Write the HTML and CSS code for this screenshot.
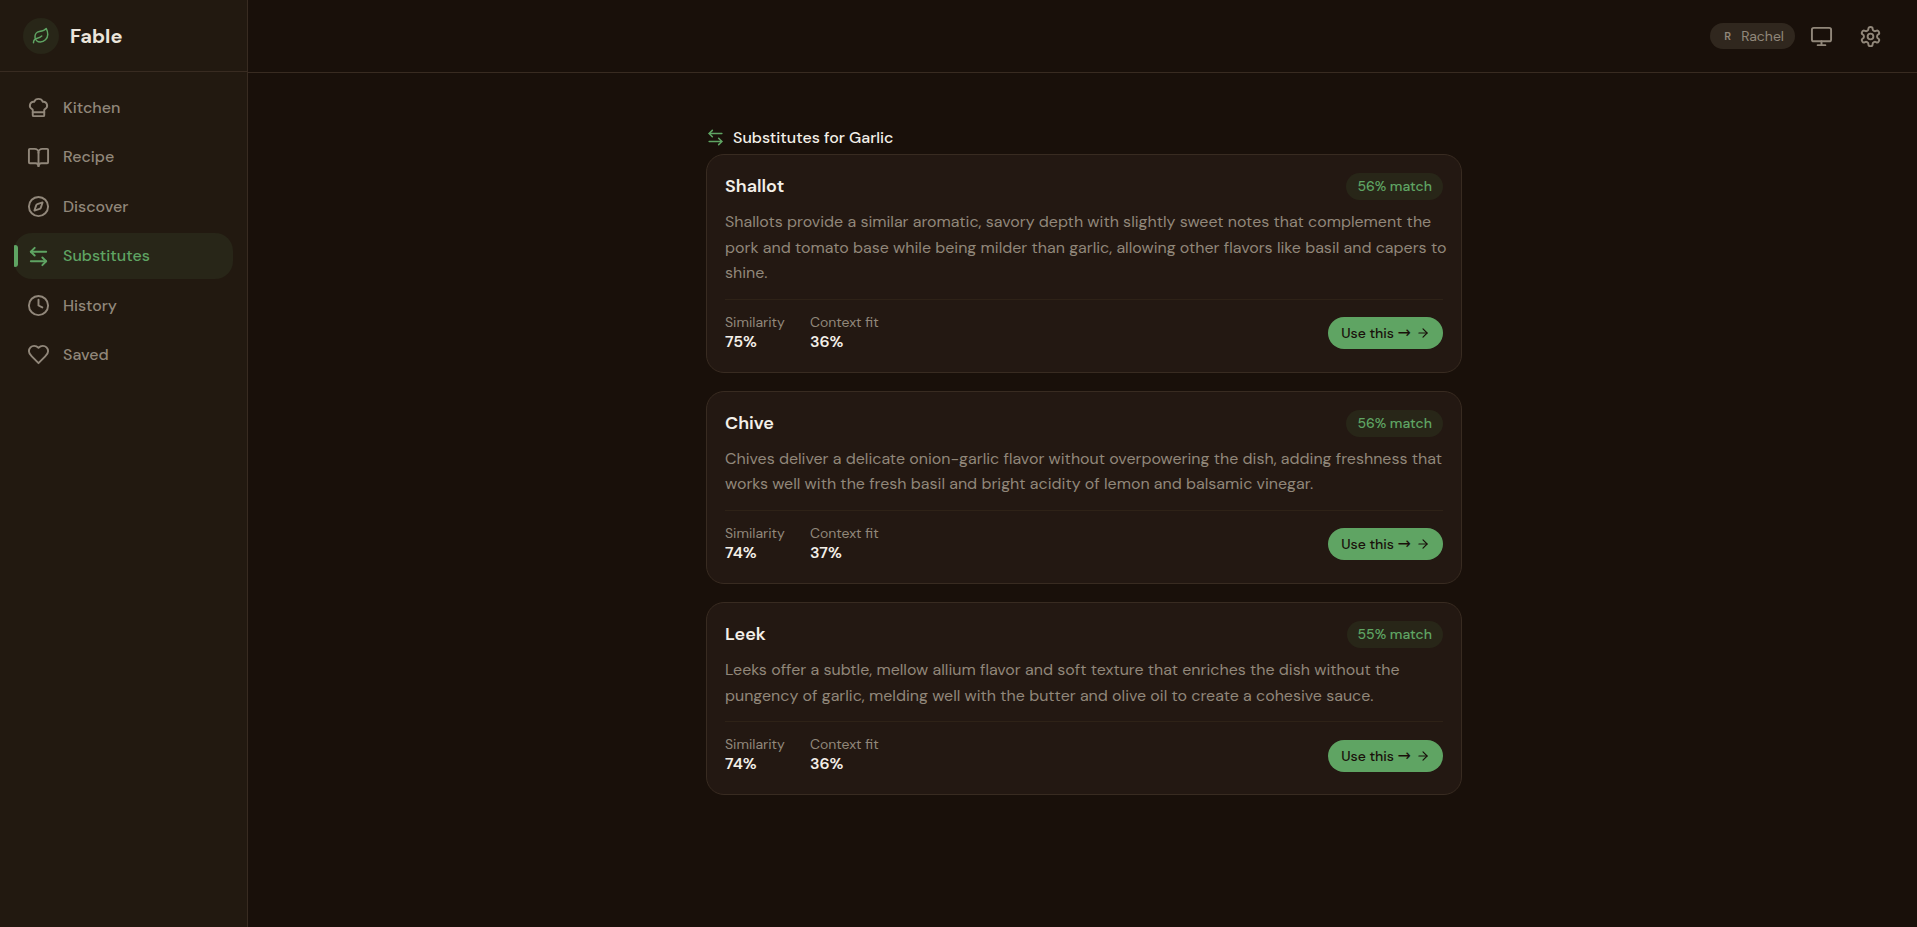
FILE: index.html
```html
<!DOCTYPE html>
<html lang="en">
<head>
<meta charset="utf-8">
<meta name="viewport" content="width=device-width, initial-scale=1">
<title>Fable – Substitutes</title>
<link rel="stylesheet" href="styles.css">
</head>
<body>
<svg class="sprite" aria-hidden="true">
  <symbol id="swap" viewBox="0 0 24 24"><path d="M8 3 4 7l4 4"/><path d="M4 7h16"/><path d="m16 21 4-4-4-4"/><path d="M20 17H4"/></symbol>
  <symbol id="arrow" viewBox="0 0 24 24"><path d="M5 12h14"/><path d="m12 5 7 7-7 7"/></symbol>
</svg>
<div class="app">
  <aside class="sidebar">
    <div class="brand">
      <span class="brand-mark"><svg class="icon icon-leaf" viewBox="0 0 24 24"><path d="M11 20A7 7 0 0 1 9.8 6.1C15.5 5 17 4.48 19 2c1 2 2 4.18 2 8 0 5.5-4.78 10-10 10Z"/><path d="M2 21c0-3 1.85-5.36 5.08-6C9.5 14.52 12 13 13 12"/></svg></span>
      <span class="brand-name">Fable</span>
    </div>
    <nav class="nav">
      <a class="nav-item" href="#kitchen"><svg class="icon icon-nav" viewBox="0 0 24 24"><path d="M17 21a1 1 0 0 0 1-1v-5.35c0-.457.316-.844.727-1.041a4 4 0 0 0-2.134-7.589 5 5 0 0 0-9.186 0 4 4 0 0 0-2.134 7.588c.411.198.727.585.727 1.041V20a1 1 0 0 0 1 1Z"/><path d="M6 17h12"/></svg><span>Kitchen</span></a>
      <a class="nav-item" href="#recipe"><svg class="icon icon-nav" viewBox="0 0 24 24"><path d="M12 7v14"/><path d="M3 18a1 1 0 0 1-1-1V4a1 1 0 0 1 1-1h5a4 4 0 0 1 4 4 4 4 0 0 1 4-4h5a1 1 0 0 1 1 1v13a1 1 0 0 1-1 1h-6a3 3 0 0 0-3 3 3 3 0 0 0-3-3z"/></svg><span>Recipe</span></a>
      <a class="nav-item" href="#discover"><svg class="icon icon-nav" viewBox="0 0 24 24"><circle cx="12" cy="12" r="10"/><path d="m16.24 7.76-1.804 5.411a2 2 0 0 1-1.265 1.265L7.76 16.24l1.804-5.411a2 2 0 0 1 1.265-1.265z"/></svg><span>Discover</span></a>
      <a class="nav-item active" href="#substitutes" aria-current="page"><svg class="icon icon-nav"><use href="#swap"/></svg><span>Substitutes</span></a>
      <a class="nav-item" href="#history"><svg class="icon icon-nav" viewBox="0 0 24 24"><circle cx="12" cy="12" r="10"/><path d="M12 6v6l4 2"/></svg><span>History</span></a>
      <a class="nav-item" href="#saved"><svg class="icon icon-nav" viewBox="0 0 24 24"><path d="M19 14c1.49-1.46 3-3.21 3-5.5A5.5 5.5 0 0 0 16.5 3c-1.76 0-3 .5-4.5 2-1.5-1.5-2.74-2-4.5-2A5.5 5.5 0 0 0 2 8.5c0 2.3 1.5 4.05 3 5.5l7 7Z"/></svg><span>Saved</span></a>
    </nav>
  </aside>
  <div class="page">
    <header class="topbar">
      <button class="user" type="button"><span class="user-initial">R</span><span>Rachel</span></button>
      <button class="icon-button" type="button" aria-label="Display"><svg class="icon icon-nav" viewBox="0 0 24 24"><rect x="2" y="3" width="20" height="14" rx="2"/><path d="M8 21h8"/><path d="M12 17v4"/></svg></button>
      <button class="icon-button" type="button" aria-label="Settings"><svg class="icon icon-nav" viewBox="0 0 24 24"><path d="M12.22 2h-.44a2 2 0 0 0-2 2v.18a2 2 0 0 1-1 1.73l-.43.25a2 2 0 0 1-2 0l-.15-.08a2 2 0 0 0-2.73.73l-.22.38a2 2 0 0 0 .73 2.73l.15.1a2 2 0 0 1 1 1.72v.51a2 2 0 0 1-1 1.74l-.15.09a2 2 0 0 0-.73 2.73l.22.38a2 2 0 0 0 2.73.73l.15-.08a2 2 0 0 1 2 0l.43.25a2 2 0 0 1 1 1.73V20a2 2 0 0 0 2 2h.44a2 2 0 0 0 2-2v-.18a2 2 0 0 1 1-1.73l.43-.25a2 2 0 0 1 2 0l.15.08a2 2 0 0 0 2.73-.73l.22-.39a2 2 0 0 0-.73-2.73l-.15-.08a2 2 0 0 1-1-1.74v-.5a2 2 0 0 1 1-1.74l.15-.09a2 2 0 0 0 .73-2.73l-.22-.38a2 2 0 0 0-2.73-.73l-.15.08a2 2 0 0 1-2 0l-.43-.25a2 2 0 0 1-1-1.73V4a2 2 0 0 0-2-2z"/><circle cx="12" cy="12" r="3"/></svg></button>
    </header>
    <main class="content">
      <section class="results">
        <h1 class="results-title"><svg class="icon icon-title"><use href="#swap"/></svg>Substitutes for Garlic</h1>
        <div class="cards">
          <article class="card">
            <div class="card-head"><h2 class="card-title">Shallot</h2><span class="match">56% match</span></div>
            <p class="card-text">Shallots provide a similar aromatic, savory depth with slightly sweet notes that complement the pork and tomato base while being milder than garlic, allowing other flavors like basil and capers to shine.</p>
            <div class="card-foot">
              <dl class="stats"><div class="stat"><dt>Similarity</dt><dd>75%</dd></div><div class="stat"><dt>Context fit</dt><dd>36%</dd></div></dl>
              <button class="use" type="button"><span>Use this <span class="use-arrow">→</span></span><svg class="icon icon-use"><use href="#arrow"/></svg></button>
            </div>
          </article>
          <article class="card">
            <div class="card-head"><h2 class="card-title">Chive</h2><span class="match">56% match</span></div>
            <p class="card-text">Chives deliver a delicate onion-garlic flavor without overpowering the dish, adding freshness that works well with the fresh basil and bright acidity of lemon and balsamic vinegar.</p>
            <div class="card-foot">
              <dl class="stats"><div class="stat"><dt>Similarity</dt><dd>74%</dd></div><div class="stat"><dt>Context fit</dt><dd>37%</dd></div></dl>
              <button class="use" type="button"><span>Use this <span class="use-arrow">→</span></span><svg class="icon icon-use"><use href="#arrow"/></svg></button>
            </div>
          </article>
          <article class="card">
            <div class="card-head"><h2 class="card-title">Leek</h2><span class="match">55% match</span></div>
            <p class="card-text">Leeks offer a subtle, mellow allium flavor and soft texture that enriches the dish without the pungency of garlic, melding well with the butter and olive oil to create a cohesive sauce.</p>
            <div class="card-foot">
              <dl class="stats"><div class="stat"><dt>Similarity</dt><dd>74%</dd></div><div class="stat"><dt>Context fit</dt><dd>36%</dd></div></dl>
              <button class="use" type="button"><span>Use this <span class="use-arrow">→</span></span><svg class="icon icon-use"><use href="#arrow"/></svg></button>
            </div>
          </article>
        </div>
      </section>
    </main>
  </div>
</div>
</body>
</html>
```

FILE: styles.css
```css
:root {
  --bg: #19100a;
  --side: #221910;
  --card: #231812;
  --line: #382b21;
  --line-soft: #2e2217;
  --text: #f3efe8;
  --muted: #91877a;
  --green: #5fa463;
  --green-soft: #282618;
}

* { box-sizing: border-box; }

body {
  margin: 0;
  background: var(--bg);
  color: var(--text);
  font-family: "DM Sans", Inter, "Liberation Sans", sans-serif;
  font-size: 16px;
}

button { font: inherit; border: 0; cursor: pointer; }
h1, h2, p, dl, dd { margin: 0; }

.sprite { position: absolute; width: 0; height: 0; }

.icon {
  flex: none;
  fill: none;
  stroke: currentColor;
  stroke-width: 2;
  stroke-linecap: round;
  stroke-linejoin: round;
}
.icon-leaf { width: 18px; height: 18px; }
.icon-nav { width: 23px; height: 23px; }
.icon-title { width: 19px; height: 19px; color: var(--green); }
.icon-use { width: 14px; height: 14px; }

.app { display: flex; min-height: 100vh; }

.sidebar {
  flex: none;
  width: 248px;
  background: var(--side);
  border-right: 1px solid var(--line);
}
.brand {
  display: flex;
  align-items: center;
  gap: 11px;
  height: 72px;
  padding: 0 23px;
  border-bottom: 1px solid var(--line);
}
.brand-mark {
  display: grid;
  place-items: center;
  width: 36px;
  height: 36px;
  border-radius: 50%;
  background: var(--green-soft);
  color: var(--green);
}
.brand-name { font-size: 20px; font-weight: 700; line-height: 24px; color: #ebe5db; }

.nav {
  display: flex;
  flex-direction: column;
  gap: 4px;
  padding: 13px 14px;
}
.nav-item {
  position: relative;
  display: flex;
  align-items: center;
  gap: 13px;
  padding: 10px 13px;
  border-radius: 18px;
  color: var(--muted);
  font-weight: 500;
  line-height: 1.59;
  text-decoration: none;
}
.nav-item.active { background: var(--green-soft); color: var(--green); }
.nav-item.active::before {
  content: "";
  position: absolute;
  left: 0;
  top: 12px;
  bottom: 12px;
  width: 4px;
  border-radius: 1px 3px 3px 1px;
  background: var(--green);
}

.page { flex: 1; min-width: 0; }

.topbar {
  display: flex;
  align-items: center;
  justify-content: flex-end;
  gap: 4px;
  height: 73px;
  padding: 0 24px;
  border-bottom: 1px solid var(--line);
}
.user {
  display: flex;
  align-items: center;
  gap: 10px;
  height: 26px;
  padding: 0 11px 0 14px;
  border-radius: 13px;
  background: #30271e;
  color: var(--muted);
  font-size: 14px;
}
.user-initial { font-size: 11px; font-weight: 600; }
.icon-button {
  display: grid;
  place-items: center;
  width: 45px;
  height: 45px;
  padding: 0;
  background: none;
  color: var(--muted);
}

.content { padding: 53px 21px 53px 24px; }
.results { max-width: 756px; margin: 0 auto; }
.results-title {
  display: flex;
  align-items: center;
  gap: 8px;
  margin-bottom: 5px;
  font-size: 16px;
  font-weight: 500;
  line-height: 23px;
}

.cards { display: flex; flex-direction: column; gap: 18px; }
.card {
  padding: 18px;
  border: 1px solid var(--line);
  border-radius: 18px;
  background: var(--card);
}
.card-head {
  display: flex;
  align-items: center;
  justify-content: space-between;
  margin-bottom: 9px;
}
.card-title { font-size: 18px; font-weight: 600; line-height: 27px; }
.match {
  padding: 0 11px;
  border-radius: 14px;
  background: var(--green-soft);
  color: var(--green);
  font-size: 14px;
  font-weight: 500;
  line-height: 27px;
}
.card-text {
  margin-right: -4px;
  color: var(--muted);
  line-height: 1.6;
}
.card-foot {
  display: flex;
  align-items: center;
  justify-content: space-between;
  margin-top: 13px;
  padding-top: 13px;
  border-top: 1px solid var(--line-soft);
}
.stats { display: flex; gap: 25px; padding-bottom: 2px; }
.stat dt { color: var(--muted); font-size: 14px; line-height: 19px; }
.stat dd { font-weight: 600; line-height: 20px; }
.use {
  display: flex;
  align-items: center;
  gap: 5px;
  height: 32px;
  padding: 0 13px;
  border-radius: 16px;
  background: var(--green);
  color: #19100a;
  font-size: 14px;
  font-weight: 500;
}
.use-arrow { font-family: "DejaVu Sans", sans-serif; font-size: 16px; font-weight: 400; line-height: 1; }
```
